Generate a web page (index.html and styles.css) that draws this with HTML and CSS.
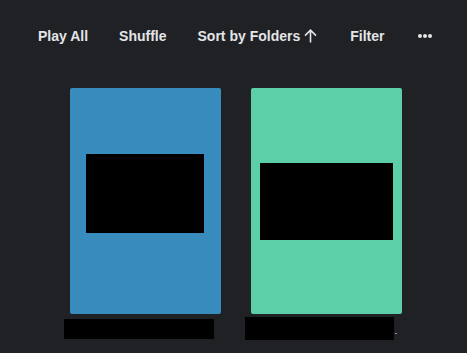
FILE: index.html
```html
<!DOCTYPE html>
<html lang="en">
<head>
    <meta charset="UTF-8">
    <meta name="viewport" content="width=device-width, initial-scale=1.0">
    <title>Folders</title>
    <link rel="stylesheet" href="styles.css">
</head>
<body>

<!-- Toolbar -->
<div class="toolbar">
    <button class="tool">Play All</button>
    <button class="tool">Shuffle</button>
    <button class="tool sort">Sort by Folders
        <svg class="arrow" width="13" height="14" viewBox="0 0 13 14">
            <path d="M6.5 13.5V1.2M1 6.6L6.5 1.2L12 6.6" fill="none" stroke="currentColor" stroke-width="1.6"/>
        </svg>
    </button>
    <button class="tool">Filter</button>
    <button class="tool more">
        <span class="dot"></span><span class="dot"></span><span class="dot"></span>
    </button>
</div>

<!-- Folder grid -->
<div class="grid">
    <div class="tile">
        <div class="card blue">
            <div class="thumb thumb-one"></div>
        </div>
        <div class="label label-one"></div>
    </div>
    <div class="tile">
        <div class="card green">
            <div class="thumb thumb-two"></div>
        </div>
        <div class="label label-two"><span class="tail"></span></div>
    </div>
</div>

</body>
</html>
```

FILE: styles.css
```css
/* Global Styling */
* {
    margin: 0;
    padding: 0;
    box-sizing: border-box;
    font-family: "Liberation Sans", Arial, sans-serif;
}

body {
    background-color: #202124;
    color: #e3e5e8;
    height: 100vh;
    overflow: hidden;
}

/* Toolbar */
.toolbar {
    display: flex;
    align-items: center;
    gap: 31px;
    padding: 28px 0 0 38px;
    height: 44px;
}

.tool {
    background: none;
    border: none;
    color: #e3e5e8;
    font-size: 14px;
    font-weight: bold;
    line-height: 16px;
    cursor: pointer;
    display: flex;
    align-items: center;
}

.tool.sort .arrow {
    margin-left: 4px;
    margin-right: 2px;
    margin-top: -1px;
}

.tool.more {
    gap: 1px;
    height: 16px;
    padding-left: 3px;
}

.dot {
    width: 4px;
    height: 4px;
    border-radius: 50%;
    background-color: #e3e5e8;
}

/* Folder Grid */
.grid {
    display: flex;
    gap: 24px;
    margin-top: 44px;
    padding-left: 64px;
}

.tile {
    width: 157px;
}

.card {
    width: 151px;
    height: 226px;
    margin-left: 6px;
    border-radius: 2px;
    display: flex;
    align-items: center;
    justify-content: center;
}

.card.blue {
    background-color: #378bbd;
}

.card.green {
    background-color: #5ccfa9;
}

.thumb {
    background-color: #000;
}

.thumb-one {
    width: 118px;
    height: 79px;
    margin-bottom: 15px;
    margin-right: 1px;
}

.thumb-two {
    width: 133px;
    height: 77px;
    margin-bottom: -1px;
}

.label {
    position: relative;
    background-color: #000;
}

.label-one {
    width: 150px;
    height: 20px;
    margin-top: 5px;
}

.label-two {
    width: 149px;
    height: 23px;
    margin-top: 3px;
}

.label .tail {
    position: absolute;
    left: 150px;
    top: 16px;
    width: 2px;
    height: 1px;
    background-color: #8a8f98;
}
```
